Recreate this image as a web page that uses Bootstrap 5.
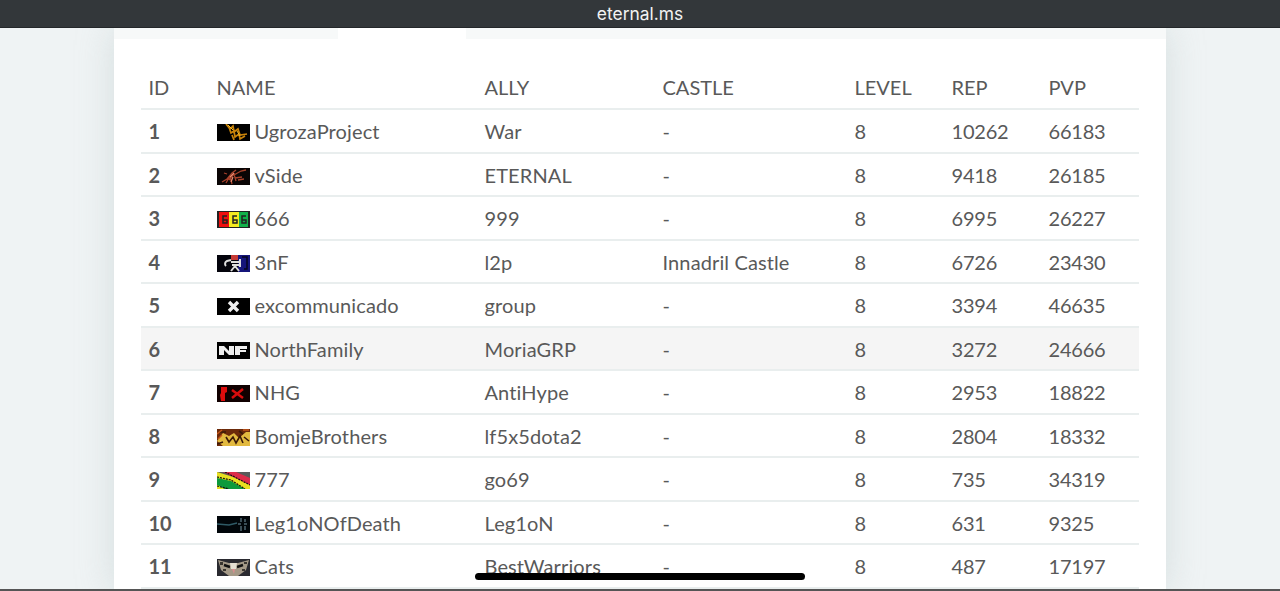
<!DOCTYPE html>
<html lang="en">
<head>
<meta charset="utf-8">
<title>eternal.ms</title>
<link href="https://cdn.jsdelivr.net/npm/bootstrap@5.3.0/dist/css/bootstrap.min.css" rel="stylesheet">
<style>
html,body{height:591px;overflow:hidden}
body{background:#eff3f4;font-family:"Lato","Noto Sans",sans-serif;color:#595959;position:relative}
.urlbar{position:relative;z-index:2;height:28px;background:#33373a;color:#f2f2f2;font-size:17.4px;line-height:27px;border-bottom:1px solid #24272a;font-family:"Inter","Roboto",sans-serif}
.sheet{width:1052px;height:563px;margin:0 auto;background:#fff;box-shadow:0 0 34px rgba(175,192,192,.4);overflow:hidden}
.tabstrip{height:11px}
.tabcell{background:#f7f9f9}
.tabgap{width:128px;background:#fff}
.tabfirst{width:224px}
.rankwrap{padding:29px 27px 0}
.ranks{table-layout:fixed;width:998px;margin:0;font-size:20px;--bs-table-color:#595959;--bs-table-bg:#fff}
.ranks th,.ranks td{padding:1px 8px 0 7.5px;height:43.5px;vertical-align:middle;border-bottom:2px solid #e9eeee;font-weight:400;line-height:24px;white-space:nowrap}
.ranks thead th{height:41px;padding-top:0;padding-bottom:2px}
.ranks td:nth-child(2),.ranks td:nth-child(3),.ranks td:nth-child(4){letter-spacing:.12px}
.ranks td:nth-child(6),.ranks td:nth-child(7){letter-spacing:-.2px}
.ranks td.rankno{font-weight:700}
.ranks tr.hovered td{--bs-table-bg:#f5f5f5;background:#f5f5f5}
.w1{width:68px}.w2{width:268px}.w3{width:178px}.w4{width:192px}.w5{width:97px}.w6{width:97px}.w7{width:98px}
.crest{width:33px;height:17px;display:inline-block;vertical-align:-2px;margin-right:5px}
.homebar{position:absolute;left:475px;top:573px;width:330px;height:7px;background:#000;border-radius:4px}
.edge{position:absolute;left:0;right:0;bottom:0;height:2px;background:#555}
</style>
</head>
<body>
<div class="urlbar text-center">eternal.ms</div>
<div class="sheet">
  <div class="tabstrip d-flex">
    <div class="tabcell tabfirst"></div><div class="tabgap"></div><div class="tabcell flex-grow-1"></div>
  </div>
  <div class="rankwrap">
    <table class="table ranks">
      <colgroup><col class="w1"><col class="w2"><col class="w3"><col class="w4"><col class="w5"><col class="w6"><col class="w7"></colgroup>
      <thead><tr><th>ID</th><th>NAME</th><th>ALLY</th><th>CASTLE</th><th>LEVEL</th><th>REP</th><th>PVP</th></tr></thead>
      <tbody>
        <tr><td class="rankno">1</td><td><svg class="crest" viewBox="0 0 33 17"><rect width="33" height="17" fill="#000"/><path d="M9 0l4 5 3-3 1 6 4-3 2 6 7-1M12 3l2 6 3-2 1 6 4-3 1 5 5-3M15 11l2 5" fill="none" stroke="#c9830a" stroke-width="1.7"/><path d="M11 1l5 5M20 7l3 5" stroke="#f5bd2a" stroke-width="1"/></svg>UgrozaProject</td><td>War</td><td>-</td><td>8</td><td>10262</td><td>66183</td></tr>
        <tr><td class="rankno">2</td><td><svg class="crest" viewBox="0 0 33 17"><rect width="33" height="17" fill="#0a0505"/><path d="M5 14l5-3 5-6 4-3M9 15l4-7 2 8M12 12l5-6 2 7M17 7l7-4 5-1M18 10l7-1M21 12l6-1M7 5l3 1" fill="none" stroke="#a8412b" stroke-width="1.3"/><path d="M13 9l4-4M14 14l2-5" stroke="#ea8a70" stroke-width="1.2"/></svg>vSide</td><td>ETERNAL</td><td>-</td><td>8</td><td>9418</td><td>26185</td></tr>
        <tr><td class="rankno">3</td><td><svg class="crest" viewBox="0 0 33 17"><rect width="33" height="17" fill="#222"/><rect x="2" y="1" width="10" height="15" fill="#ee0f0f"/><rect x="12" y="1" width="10" height="15" fill="#f3ea20"/><rect x="22" y="1" width="9" height="15" fill="#12b04a"/><path d="M10 5H6v7h4V9H6M20 5h-4v7h4V9h-4M29 5h-4v7h4V9h-4" fill="none" stroke="#222" stroke-width="1.5"/></svg>666</td><td>999</td><td>-</td><td>8</td><td>6995</td><td>26227</td></tr>
        <tr><td class="rankno">4</td><td><svg class="crest" viewBox="0 0 33 17"><rect width="33" height="17" fill="#04040c"/><rect x="21" y="0" width="12" height="17" fill="#15157a"/><path d="M14 0h7v5h-7z" fill="#c63a35"/><path d="M25 2h5v12h-3" fill="none" stroke="#05051c" stroke-width="1.5"/><path d="M9 11a3 3 0 0 1 1-5l4-1M14 7h8M15 10h7M14 16l4-5 4 5M23 4l0 8" fill="none" stroke="#ddd" stroke-width="2"/></svg>3nF</td><td>l2p</td><td>Innadril Castle</td><td>8</td><td>6726</td><td>23430</td></tr>
        <tr><td class="rankno">5</td><td><svg class="crest" viewBox="0 0 33 17"><rect width="33" height="17" fill="#000"/><path d="M12 4l9 9M21 4l-9 9" fill="none" stroke="#eee" stroke-width="3.4"/></svg>excommunicado</td><td>group</td><td>-</td><td>8</td><td>3394</td><td>46635</td></tr>
        <tr class="hovered"><td class="rankno">6</td><td><svg class="crest" viewBox="0 0 33 17"><rect width="33" height="17" fill="#000"/><path d="M2 4h5l5 5V4h5v9h-5L7 8v5H2zM18 4h12v3h-7v1h6v2h-6v3h-5z" fill="#eee"/></svg>NorthFamily</td><td>MoriaGRP</td><td>-</td><td>8</td><td>3272</td><td>24666</td></tr>
        <tr><td class="rankno">7</td><td><svg class="crest" viewBox="0 0 33 17"><rect width="33" height="17" fill="#100000"/><path d="M4 2h6v5l-2 1v8H4l-1-6 1-2z" fill="#dd0c0c"/><path d="M15 5l11 8M26 4l-11 9" fill="none" stroke="#d80c0c" stroke-width="2.5"/></svg>NHG</td><td>AntiHype</td><td>-</td><td>8</td><td>2953</td><td>18822</td></tr>
        <tr><td class="rankno">8</td><td><svg class="crest" viewBox="0 0 33 17"><rect width="33" height="17" fill="#6b2a0a"/><path d="M0 12l6-8 6 3 5-3 5 5 7-6h4v14H6z" fill="#e2b93f"/><path d="M9 8l3 5 4-5 3 6 4-7 3 7M2 3h7M22 2l4 3M0 15l6-2M27 8l5 4" fill="none" stroke="#3b1a08" stroke-width="1.6"/><path d="M0 5l5-4M1 10l4-4M26 1h6" stroke="#c4561a" stroke-width="1.5"/></svg>BomjeBrothers</td><td>lf5x5dota2</td><td>-</td><td>8</td><td>2804</td><td>18332</td></tr>
        <tr><td class="rankno">9</td><td><svg class="crest" viewBox="0 0 33 17"><rect width="33" height="17" fill="#e8e020"/><path d="M0 0h33v10z" fill="#5a5a5a"/><path d="M6 0h13l14 6v7z" fill="#dd2c4a"/><path d="M0 6l14 3 14 8H8L0 13z" fill="#0c9a3c"/><path d="M0 5l14 3 14 9M8 0l25 13M0 14l12 3" fill="none" stroke="#111" stroke-width="1.2" stroke-dasharray="2 1"/></svg>777</td><td>go69</td><td>-</td><td>8</td><td>735</td><td>34319</td></tr>
        <tr><td class="rankno">10</td><td><svg class="crest" viewBox="0 0 33 17"><rect width="33" height="17" fill="#01060a"/><path d="M0 8l12 1 8-2" stroke="#2f5a66" stroke-width="1.5" fill="none"/><path d="M24 2v4M21 8h3M27 8h3M24 10v5M28 3v3M28 10v4" stroke="#4d6670" stroke-width="1.5" fill="none"/></svg>Leg1oNOfDeath</td><td>Leg1oN</td><td>-</td><td>8</td><td>631</td><td>9325</td></tr>
        <tr><td class="rankno">11</td><td><svg class="crest" viewBox="0 0 33 17"><rect width="33" height="17" fill="#2a2a30"/><path d="M1 1l11 3h9l11-3-3 10-8 6h-9l-8-6z" fill="#a59a88"/><path d="M3 3h3v3H3zM27 3h3v2h-3zM6 10h3v2H6zM25 10h3v2h-3z" fill="#3a3630"/><path d="M7 6l6 2M20 8l6-2" stroke="#111" stroke-width="2.4"/><path d="M13 4h7l-1 6h-5z" fill="#e5dfd2"/><path d="M15 10h3l-1 5z" fill="#d98f90"/></svg>Cats</td><td>BestWarriors</td><td>-</td><td>8</td><td>487</td><td>17197</td></tr>
      </tbody>
    </table>
  </div>
</div>
<div class="homebar"></div>
<div class="edge"></div>
<script src="https://cdn.jsdelivr.net/npm/bootstrap@5.3.0/dist/js/bootstrap.bundle.min.js"></script>
</body>
</html>
